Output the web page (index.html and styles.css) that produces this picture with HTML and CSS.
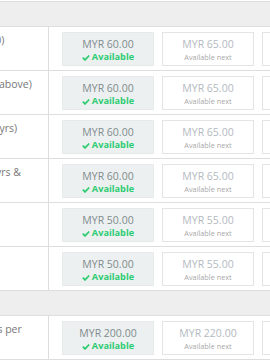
FILE: index.html
```html
<!DOCTYPE html>
<html>
<head>
<meta charset="utf-8">
<link rel="stylesheet" href="styles.css">
</head>
<body>
<div class="table">
  <div class="band"></div>
  <div class="row">
    <div class="label">Adults (13 years to 60)</div>
    <div class="prices">
      <div class="box now"><div class="price">MYR 60.00</div><div class="avail"><svg viewBox="0 0 10 8" class="chk"><path d="M1 4.2 L3.8 7 L9 1.5" /></svg>Available</div></div>
      <div class="box next"><div class="price">MYR 65.00</div><div class="nexttxt">Available next</div></div>
      <div class="box next"><div class="price">MYR 70.00</div><div class="nexttxt">Available next</div></div>
    </div>
  </div>
  <div class="row">
    <div class="label">Senior Citizens (60 &amp; above)</div>
    <div class="prices">
      <div class="box now"><div class="price">MYR 60.00</div><div class="avail"><svg viewBox="0 0 10 8" class="chk"><path d="M1 4.2 L3.8 7 L9 1.5" /></svg>Available</div></div>
      <div class="box next"><div class="price">MYR 65.00</div><div class="nexttxt">Available next</div></div>
      <div class="box next"><div class="price">MYR 70.00</div><div class="nexttxt">Available next</div></div>
    </div>
  </div>
  <div class="row">
    <div class="label">Children (aged 3 - 12 yrs)</div>
    <div class="prices">
      <div class="box now"><div class="price">MYR 60.00</div><div class="avail"><svg viewBox="0 0 10 8" class="chk"><path d="M1 4.2 L3.8 7 L9 1.5" /></svg>Available</div></div>
      <div class="box next"><div class="price">MYR 65.00</div><div class="nexttxt">Available next</div></div>
      <div class="box next"><div class="price">MYR 70.00</div><div class="nexttxt">Available next</div></div>
    </div>
  </div>
  <div class="row">
    <div class="label">Student (age 13 - 17 yrs &amp; above)</div>
    <div class="prices">
      <div class="box now"><div class="price">MYR 60.00</div><div class="avail"><svg viewBox="0 0 10 8" class="chk"><path d="M1 4.2 L3.8 7 L9 1.5" /></svg>Available</div></div>
      <div class="box next"><div class="price">MYR 65.00</div><div class="nexttxt">Available next</div></div>
      <div class="box next"><div class="price">MYR 70.00</div><div class="nexttxt">Available next</div></div>
    </div>
  </div>
  <div class="row">
    <div class="label">Local Senior</div>
    <div class="prices">
      <div class="box now"><div class="price">MYR 50.00</div><div class="avail"><svg viewBox="0 0 10 8" class="chk"><path d="M1 4.2 L3.8 7 L9 1.5" /></svg>Available</div></div>
      <div class="box next"><div class="price">MYR 55.00</div><div class="nexttxt">Available next</div></div>
      <div class="box next"><div class="price">MYR 60.00</div><div class="nexttxt">Available next</div></div>
    </div>
  </div>
  <div class="row">
    <div class="label">OKU</div>
    <div class="prices">
      <div class="box now"><div class="price">MYR 50.00</div><div class="avail"><svg viewBox="0 0 10 8" class="chk"><path d="M1 4.2 L3.8 7 L9 1.5" /></svg>Available</div></div>
      <div class="box next"><div class="price">MYR 55.00</div><div class="nexttxt">Available next</div></div>
      <div class="box next"><div class="price">MYR 60.00</div><div class="nexttxt">Available next</div></div>
    </div>
  </div>
  <div class="band"></div>
  <div class="row">
    <div class="label">Group (20-30 persons per group)</div>
    <div class="prices">
      <div class="box now"><div class="price">MYR 200.00</div><div class="avail"><svg viewBox="0 0 10 8" class="chk"><path d="M1 4.2 L3.8 7 L9 1.5" /></svg>Available</div></div>
      <div class="box next"><div class="price">MYR 220.00</div><div class="nexttxt">Available next</div></div>
      <div class="box next"><div class="price">MYR 240.00</div><div class="nexttxt">Available next</div></div>
    </div>
  </div>
</div>
</body>
</html>
```

FILE: styles.css
```css
html, body {
  margin: 0;
  padding: 0;
  background: #fff;
  overflow: hidden;
}
body {
  font-family: "Open Sans", "Liberation Sans", sans-serif;
  width: 270px;
  height: 360px;
}
.table {
  margin-top: 1px;
  border-top: 1px solid #dddddd;
  width: 600px;
  margin-left: -112px;
}
.band {
  height: 24px;
  background: #eeeeee;
  border-bottom: 1px solid #dddddd;
}
.row {
  display: flex;
  height: 44px;
  box-sizing: border-box;
  border-bottom: 1px solid #dddddd;
}
.label {
  box-sizing: border-box;
  width: 161px;
  flex: none;
  border-right: 1px solid #dddddd;
  padding: 6px 8px 0 8px;
  font-size: 10.5px;
  line-height: 15px;
  color: #777777;
}
.prices {
  display: flex;
  gap: 8px;
  padding: 5px 0 0 13px;
}
.box {
  box-sizing: border-box;
  width: 92px;
  height: 34px;
  text-align: center;
  padding-top: 4px;
}
.box.now {
  background: #ecf0f1;
  border: 1px solid #e6eaeb;
}
.box.next {
  background: #ffffff;
  border: 1px solid #e4e4e4;
}
.price {
  font-size: 10.5px;
  line-height: 15px;
}
.now .price {
  color: #7f8c8d;
}
.next .price {
  color: #b3babf;
}
.avail {
  font-size: 9.2px;
  line-height: 10px;
  font-weight: 700;
  color: #2ecc71;
  display: flex;
  justify-content: center;
  align-items: center;
  gap: 2px;
}
.chk {
  width: 8px;
  height: 7px;
  fill: none;
  stroke: #2ecc71;
  stroke-width: 2.2;
}
.nexttxt {
  font-size: 7.3px;
  line-height: 10px;
  color: #a8a8a8;
}
```
